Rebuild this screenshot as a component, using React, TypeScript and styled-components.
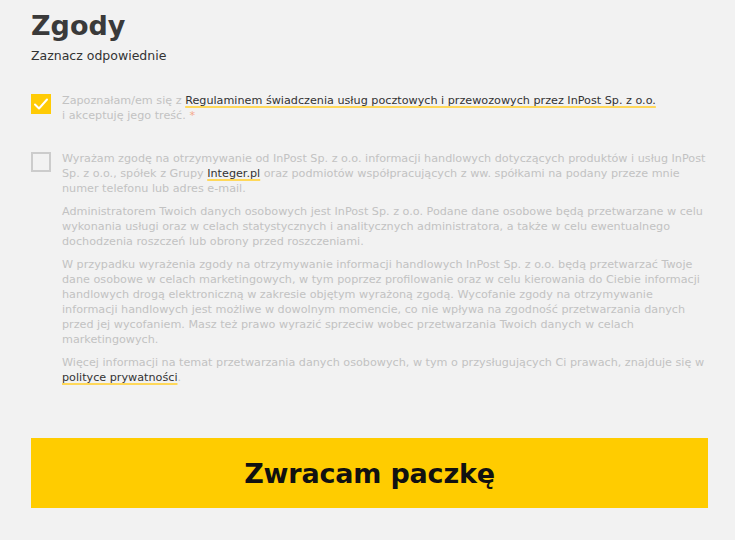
import React from "react";
import styled, { createGlobalStyle } from "styled-components";

const Global = createGlobalStyle`
  html, body { margin: 0; padding: 0; background: #f2f2f2; }
  body { font-family: "DejaVu Sans", "Open Sans", sans-serif; }
  * { box-sizing: border-box; }
`;

const Page = styled.div`
  width: 735px;
  height: 540px;
  padding: 9px 27px 0 31px;
  display: flex;
  flex-direction: column;
  overflow: hidden;
`;

const Title = styled.h1`
  margin: 0;
  font-family: "DejaVu Sans", sans-serif;
  font-size: 27px;
  font-weight: 700;
  color: #3a3a3a;
  line-height: 34px;
`;

const Subtitle = styled.div`
  margin-top: 5px;
  font-size: 12.5px;
  font-weight: 500;
  color: #333;
  line-height: 16px;
`;

const Consents = styled.div`
  margin-top: 29px;
  display: flex;
  flex-direction: column;
  gap: 28px;
`;

const Row = styled.label`
  display: flex;
  align-items: flex-start;
  gap: 11px;
`;

const Box = styled.span<{ $checked?: boolean }>`
  flex: none;
  width: 20px;
  height: 20px;
  margin-top: 1px;
  display: flex;
  align-items: center;
  justify-content: center;
  background: ${(p) => (p.$checked ? "#ffcb05" : "transparent")};
  border: ${(p) => (p.$checked ? "none" : "2px solid #cccccc")};
`;

const Texts = styled.div`
  display: flex;
  flex-direction: column;
  gap: 8px;
  font-size: 11.2px;
  line-height: 15px;
  color: #c2c2c2;
`;

const P = styled.p`
  margin: 0;
`;

const Link = styled.a`
  color: #333;
  text-decoration: underline;
  text-decoration-color: #ffd85a;
  text-decoration-thickness: 2px;
  text-underline-offset: 2px;
`;

const Star = styled.span`
  color: #f5a98c;
`;

const Button = styled.button`
  margin-top: 53px;
  width: 677px;
  height: 70px;
  border: none;
  background: #ffcc00;
  color: #111;
  font-family: "DejaVu Sans", sans-serif;
  font-size: 27px;
  font-weight: 700;
  letter-spacing: -0.2px;
  cursor: pointer;
`;

const Check = () => (
  <svg width="16" height="14" viewBox="0 0 16 14">
    <polyline points="2,7.5 6,11.5 14,2.5" fill="none" stroke="#fff" strokeWidth="2" strokeLinecap="round" strokeLinejoin="round" />
  </svg>
);

export default function App() {
  return (
    <>
      <Global />
      <Page>
        <Title>Zgody</Title>
        <Subtitle>Zaznacz odpowiednie</Subtitle>
        <Consents>
          <Row>
            <Box $checked>
              <Check />
            </Box>
            <Texts>
              <P>
                Zapoznałam/em się z{" "}
                <Link>Regulaminem świadczenia usług pocztowych i przewozowych przez InPost Sp. z o.o.</Link>
                <br />i akceptuję jego treść. <Star>*</Star>
              </P>
            </Texts>
          </Row>
          <Row>
            <Box />
            <Texts>
              <P>
                Wyrażam zgodę na otrzymywanie od InPost Sp. z o.o. informacji handlowych dotyczących produktów i usług InPost Sp. z o.o., spółek z Grupy{" "}
                <Link>Integer.pl</Link> oraz podmiotów współpracujących z ww. spółkami na podany przeze mnie numer telefonu lub adres e-mail.
              </P>
              <P>
                Administratorem Twoich danych osobowych jest InPost Sp. z o.o. Podane dane osobowe będą przetwarzane w celu wykonania usługi oraz w celach statystycznych i analitycznych administratora, a także w celu ewentualnego dochodzenia roszczeń lub obrony przed roszczeniami.
              </P>
              <P>
                W przypadku wyrażenia zgody na otrzymywanie informacji handlowych InPost Sp. z o.o. będą przetwarzać Twoje dane osobowe w celach marketingowych, w tym poprzez profilowanie oraz w celu kierowania do Ciebie informacji handlowych drogą elektroniczną w zakresie objętym wyrażoną zgodą. Wycofanie zgody na otrzymywanie informacji handlowych jest możliwe w dowolnym momencie, co nie wpływa na zgodność przetwarzania danych przed jej wycofaniem. Masz też prawo wyrazić sprzeciw wobec przetwarzania Twoich danych w celach marketingowych.
              </P>
              <P>
                Więcej informacji na temat przetwarzania danych osobowych, w tym o przysługujących Ci prawach, znajduje się w{" "}
                <Link>polityce prywatności</Link>.
              </P>
            </Texts>
          </Row>
        </Consents>
        <Button>Zwracam paczkę</Button>
      </Page>
    </>
  );
}
